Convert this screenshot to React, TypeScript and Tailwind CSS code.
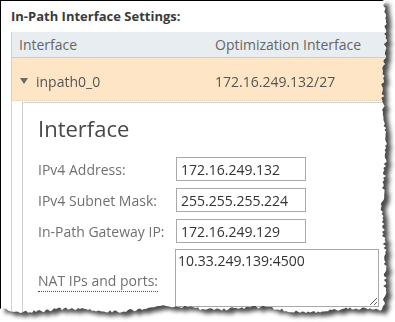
import React from 'react';

// jagged "torn paper" outline, computed once
const tornEdge = (() => {
  let seed = 7;
  const rand = () => {
    seed = (seed * 16807) % 2147483647;
    return seed / 2147483647;
  };
  const pts: string[] = ['0px 0px'];
  for (let y = 0; y <= 308; y += 2) {
    const x = 384 + Math.sin(y / 19) * 1.5 + (rand() - 0.5) * 3.6;
    pts.push(`${x.toFixed(1)}px ${y}px`);
  }
  for (let x = 382; x >= 0; x -= 2) {
    const y = 309 + Math.sin(x / 15) * 2 + Math.sin(x / 41) * 1.6 + (rand() - 0.5) * 3;
    pts.push(`${x}px ${y.toFixed(1)}px`);
  }
  return `polygon(${pts.join(', ')})`;
})();

type FieldProps = { label: string; value: string };

const Field: React.FC<FieldProps> = ({ label, value }) => (
  <div className="flex items-center">
    <label className="w-[138px] shrink-0 text-[14px] text-[#707070]">{label}</label>
    <input
      readOnly
      value={value}
      className="w-[130px] h-[24px] border border-[#a9a9a9] px-[4px] text-[14px] text-[#333] outline-none bg-white"
    />
  </div>
);

const App: React.FC = () => {
  return (
    <div className="w-[395px] h-[322px] bg-white overflow-hidden font-['Open_Sans',sans-serif]">
      <div className="drop-shadow-[5px_4px_2px_rgba(0,0,0,0.7)]">
        <div style={{ clipPath: tornEdge }} className="w-[395px] h-[322px] bg-white border-l border-t border-black">
          <div className="pt-[6px] pl-[10px]">
            <h2 className="text-[13px] font-bold leading-[18px] text-[#3a3a3a]">In-Path Interface Settings:</h2>

            <div className="mt-[7px] border-l border-[#cfd3d6]">
              {/* column header */}
              <div className="flex items-center h-[26px] bg-[#e8edf1] border-b border-[#c9ced2] text-[14px] text-[#666]">
                <div className="w-[203px] pl-[7px]">Interface</div>
                <div>Optimization Interface</div>
              </div>

              {/* selected row */}
              <div className="flex items-center h-[43px] pt-[4px] bg-[#fde5c5] border-b border-dotted border-[#e0cdb2] text-[14px] text-[#555]">
                <div className="w-[203px] pl-[8px] flex items-center gap-[8px]">
                  <svg width="8" height="6" viewBox="0 0 8 6">
                    <polygon points="0,0 8,0 4,6" fill="#6b6b6b" />
                  </svg>
                  <span>inpath0_0</span>
                </div>
                <div>172.16.249.132/27</div>
              </div>

              {/* expanded panel */}
              <div className="ml-[10px] mt-[1px] border-l border-t border-[#cfcfcf] pl-[15px] pt-[10px] pb-[20px]">
                <h3 className="text-[22px] leading-[30px] text-[#474747]">Interface</h3>
                <div className="mt-[14px] flex flex-col gap-[7px]">
                  <Field label="IPv4 Address:" value="172.16.249.132" />
                  <Field label="IPv4 Subnet Mask:" value="255.255.255.224" />
                  <Field label="In-Path Gateway IP:" value="172.16.249.129" />
                  <div className="flex items-center mt-[-1px]">
                    <div className="w-[137px] shrink-0 pt-[4px]">
                      <span className="text-[14px] text-[#707070] border-b border-dotted border-[#555] pb-[1px]">NAT IPs and ports:</span>
                    </div>
                    <textarea
                      readOnly
                      value="10.33.249.139:4500"
                      className="w-[204px] h-[58px] border border-[#a9a9a9] px-[2px] py-[1px] text-[14px] leading-[19px] text-[#333] outline-none bg-white"
                    />
                  </div>
                </div>
              </div>
            </div>
          </div>
        </div>
      </div>
    </div>
  );
};

export default App;
